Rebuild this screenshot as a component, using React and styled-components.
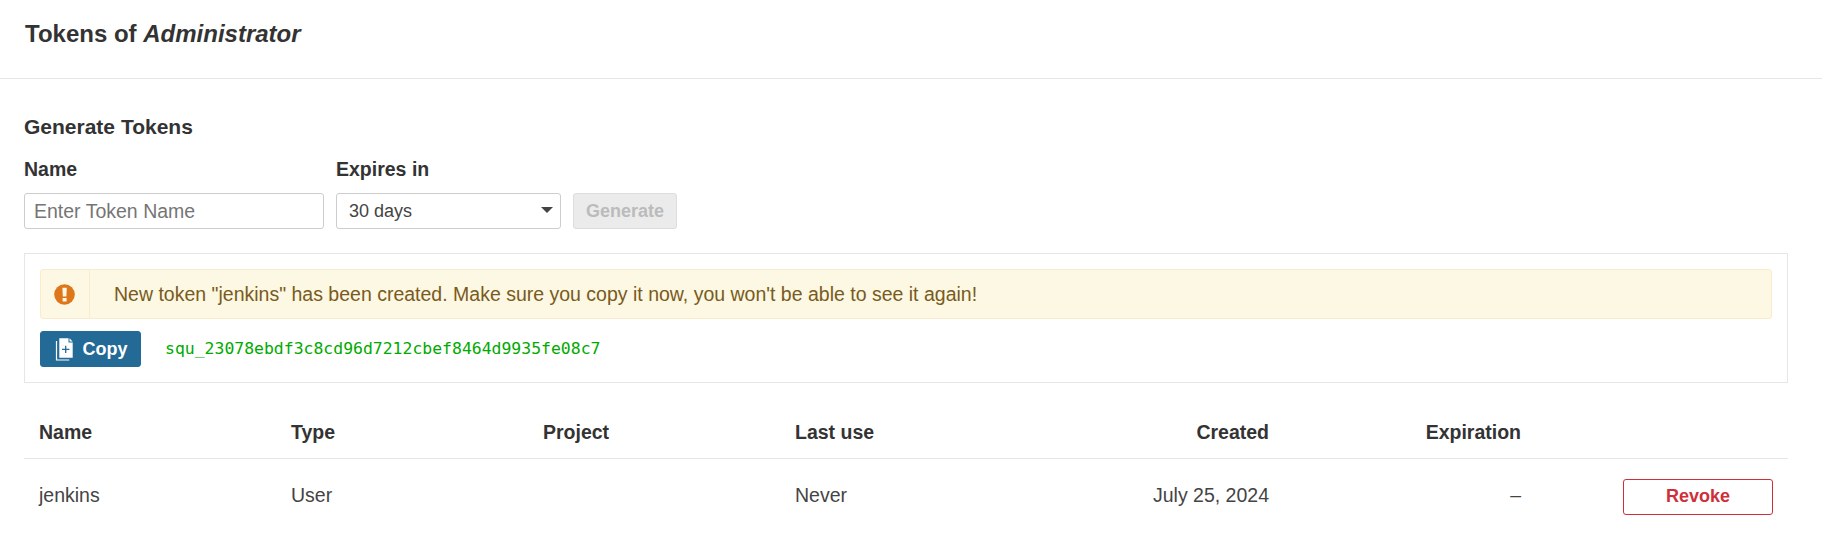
import React from 'react';
import styled, { createGlobalStyle } from 'styled-components';

const GlobalStyle = createGlobalStyle`
  * { box-sizing: border-box; }
  body {
    margin: 0;
    background: #fff;
    color: #444;
    font-family: "Liberation Sans", Arial, Helvetica, sans-serif;
    font-size: 19.5px;
    line-height: 24px;
  }
`;

const Header = styled.header`
  height: 79px;
  padding: 17px 25px 0;
  border-bottom: 1px solid #e6e6e6;
`;

const Title = styled.h2`
  margin: 0;
  color: #333;
  font-size: 24px;
  line-height: 34px;
  font-weight: 700;
`;

const Body = styled.main`
  padding: 36px 34px 0 24px;
`;

const SectionTitle = styled.h3`
  margin: 0;
  color: #333;
  font-size: 21px;
  line-height: 24px;
  font-weight: 700;
`;

const Form = styled.form`
  display: flex;
  align-items: flex-end;
  gap: 12px;
  margin-top: 18px;
`;

const Field = styled.div`
  display: flex;
  flex-direction: column;
  gap: 12px;
  width: ${(p) => p.$width}px;
`;

const Label = styled.label`
  color: #333;
  font-weight: 700;
`;

const TextInput = styled.input`
  height: 36px;
  width: 100%;
  padding: 0 9px;
  border: 1px solid #cdcdcd;
  border-radius: 3px;
  background: #fff;
  font: inherit;
  &::placeholder { color: #757575; opacity: 1; }
`;

const Select = styled.div`
  display: flex;
  align-items: center;
  justify-content: space-between;
  height: 36px;
  padding: 0 7px 0 12px;
  border: 1px solid #cdcdcd;
  border-radius: 3px;
  font-size: 18px;
`;

const Caret = styled.svg`
  margin-bottom: 2px;
`;

const Button = styled.button`
  display: inline-flex;
  align-items: center;
  justify-content: center;
  height: 36px;
  width: ${(p) => p.$width}px;
  padding: 0;
  border: 1px solid;
  border-radius: 3px;
  font: 700 18px/22px "Liberation Sans", Arial, sans-serif;
`;

const GenerateButton = styled(Button)`
  color: #bbb;
  background: #ebebeb;
  border-color: #ddd;
`;

const CopyButton = styled(Button)`
  justify-content: flex-start;
  gap: 9.5px;
  padding-left: 14px;
  color: #fff;
  background: #236a97;
  border-color: #236a97;
`;

const RevokeButton = styled(Button)`
  padding-bottom: 2px;
  color: #d02f3a;
  background: #fff;
  border-color: #d02f3a;
`;

const Panel = styled.section`
  height: 130px;
  margin-top: 24px;
  padding: 15px;
  border: 1px solid #e6e6e6;
`;

const Alert = styled.div`
  display: flex;
  height: 50px;
  border: 1px solid #faebcc;
  border-radius: 3px;
  background: #fcf8e3;
  color: #7a5a20;
`;

const AlertIcon = styled.div`
  display: flex;
  align-items: center;
  justify-content: center;
  width: 49px;
  padding-right: 1px;
  border-right: 1px solid #faebcc;
`;

const AlertText = styled.div`
  display: flex;
  align-items: center;
  padding-left: 24px;
`;

const TokenRow = styled.div`
  display: flex;
  align-items: center;
  gap: 24px;
  margin-top: 12px;
`;

const Token = styled.code`
  color: #00aa00;
  font-family: Consolas, "DejaVu Sans Mono", monospace;
  font-size: 16.44px;
`;

const Table = styled.table`
  width: 100%;
  margin-top: 27px;
  table-layout: fixed;
  border-spacing: 0;
`;

const Th = styled.th`
  height: 49px;
  padding: 0 15px 4px;
  border-bottom: 1px solid #e6e6e6;
  color: #333;
  text-align: ${(p) => p.$align || 'left'};
`;

const Td = styled.td`
  height: 76px;
  padding: 0 15px ${(p) => (p.$action ? 0 : 4)}px;
  text-align: ${(p) => p.$align || 'left'};
  vertical-align: middle;
  line-height: ${(p) => (p.$action ? 0 : '24px')};
`;

export default function App() {
  return (
    <>
      <GlobalStyle />
      <Header><Title>Tokens of <em>Administrator</em></Title></Header>
      <Body>
        <SectionTitle>Generate Tokens</SectionTitle>
        <Form>
          <Field $width={300}>
            <Label htmlFor="token-name">Name</Label>
            <TextInput id="token-name" placeholder="Enter Token Name" />
          </Field>
          <Field $width={225}>
            <Label>Expires in</Label>
            <Select>
              <span>30 days</span>
              <Caret width="12" height="6" viewBox="0 0 12 6"><path d="M0 0h12L6 6z" fill="#444" /></Caret>
            </Select>
          </Field>
          <GenerateButton $width={104} type="button" disabled>Generate</GenerateButton>
        </Form>
        <Panel>
          <Alert>
            <AlertIcon>
              <svg width="21" height="21" viewBox="0 0 21 21">
                <circle cx="10.5" cy="10.5" r="10.3" fill="#dd7719" />
                <path d="M8.4 3.8h4.4l-.4 8.7H8.8zM8.6 14h4v3.6h-4z" fill="#fcf8e3" />
              </svg>
            </AlertIcon>
            <AlertText>New token "jenkins" has been created. Make sure you copy it now, you won't be able to see it again!</AlertText>
          </Alert>
          <TokenRow>
            <CopyButton $width={101} type="button">
              <svg width="18" height="24" viewBox="0 0 18 24">
                <path d="M4.3 1.3h9.2v4.2h4.2v15.2H4.3z" fill="#fff" />
                <path d="M14.5 1.3v3.2h3.2z" fill="#fff" />
                <path d="M10.7 8.7v7.4M7 12.4h7.4" fill="none" stroke="#236a97" strokeWidth="1.3" />
                <path d="M1.5 4v19h12.8" fill="none" stroke="#fff" strokeWidth="1.2" />
              </svg>
              <span>Copy</span>
            </CopyButton>
            <Token>squ_23078ebdf3c8cd96d7212cbef8464d9935fe08c7</Token>
          </TokenRow>
        </Panel>
        <Table>
          <thead>
            <tr>
              <Th>Name</Th><Th>Type</Th><Th>Project</Th><Th>Last use</Th>
              <Th $align="right">Created</Th><Th $align="right">Expiration</Th><Th />
            </tr>
          </thead>
          <tbody>
            <tr>
              <Td>jenkins</Td><Td>User</Td><Td /><Td>Never</Td>
              <Td $align="right">July 25, 2024</Td><Td $align="right">–</Td>
              <Td $align="right" $action><RevokeButton $width={150} type="button">Revoke</RevokeButton></Td>
            </tr>
          </tbody>
        </Table>
      </Body>
    </>
  );
}
